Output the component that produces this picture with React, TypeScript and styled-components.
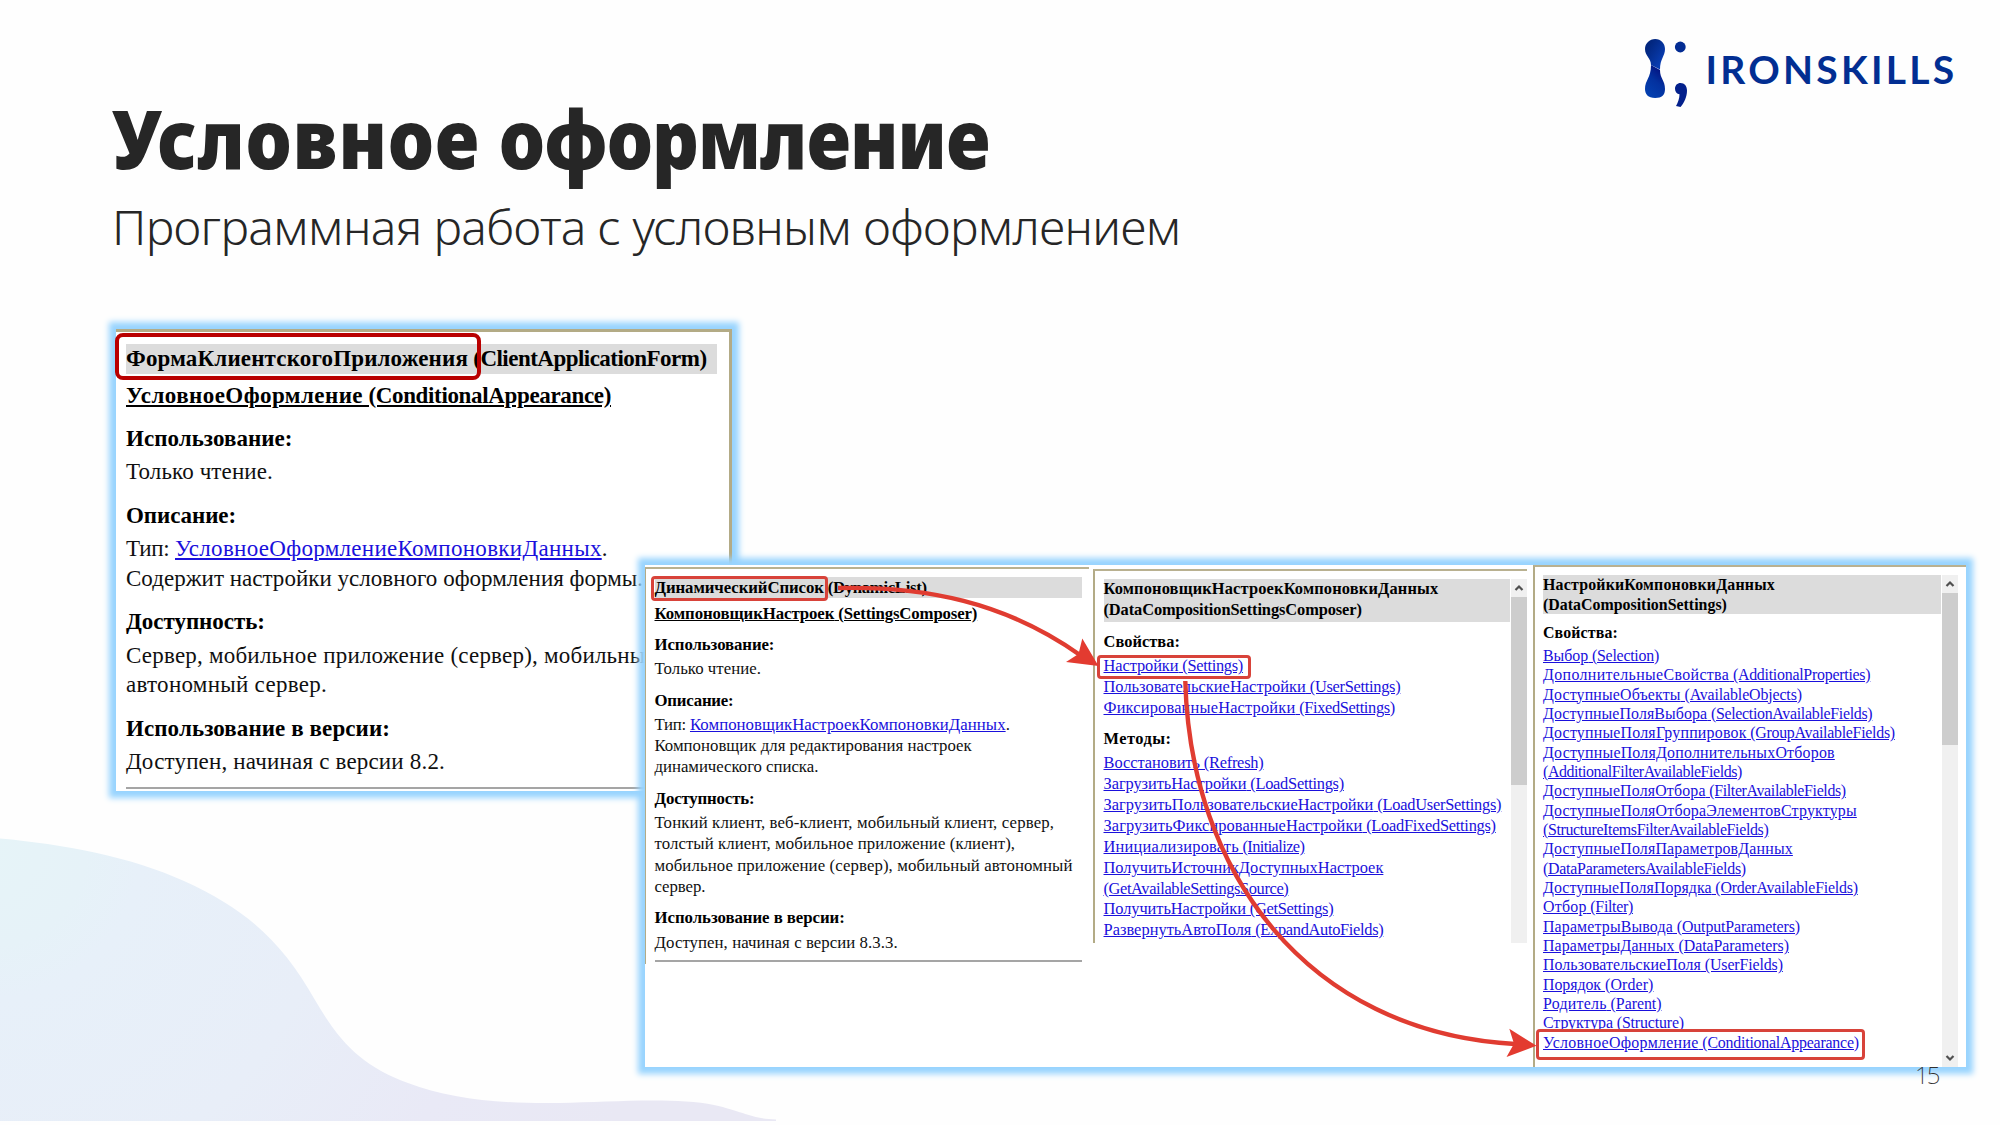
import React from 'react';
import styled, { createGlobalStyle, css } from 'styled-components';

const GlobalStyle = createGlobalStyle`
  body {
    margin: 0;
    background: #ffffff;
  }
`;

const serif = '"Liberation Serif", "Times New Roman", serif';

const Slide = styled.main`
  position: relative;
  width: 2000px;
  height: 1125px;
  overflow: hidden;
  background: #fefefe;
  color: #262626;
  font-family: 'Noto Sans', sans-serif;
`;

const Wave = styled.svg`
  position: absolute;
  left: 0;
  top: 830px;
`;

const Heading = styled.header`
  position: relative;
  padding: 77px 0 0 112px;
  white-space: nowrap;
`;

const Title = styled.h1`
  margin: 0;
  font-size: 82px;
  font-weight: 900;
  line-height: 120px;
  transform: scaleX(0.894);
  transform-origin: 0 50%;
`;

const TitleWord = styled.span<{ $track: number }>`
  letter-spacing: ${(p) => p.$track}px;
`;

const Subtitle = styled.p`
  margin: 2px 0 0;
  font-size: 48px;
  font-weight: 300;
  line-height: 56px;
  letter-spacing: -0.62px;
`;

const Logo = styled.div`
  position: absolute;
  left: 1640px;
  top: 32px;
  display: flex;
  align-items: center;
`;

const LogoName = styled.span`
  margin: -7px 0 0 11.5px;
  font-family: Lato, sans-serif;
  font-size: 39px;
  font-weight: 700;
  line-height: 50px;
  letter-spacing: 3.25px;
  color: #022e92;
`;

const glow = css`
  box-shadow: 0 0 6px 7px #98d4fe;
`;

const FormWindow = styled.section`
  position: absolute;
  left: 116px;
  top: 329px;
  width: 616px;
  height: 462px;
  box-sizing: border-box;
  padding: 12px 12px 0 10px;
  border-top: 3px solid #b3ab86;
  border-right: 3px solid #b3ab86;
  background: #ffffff;
  ${glow}
`;

const ListWindow = styled.section`
  position: absolute;
  left: 645px;
  top: 565px;
  width: 1321px;
  height: 502px;
  display: flex;
  align-items: flex-start;
  background: #ffffff;
  ${glow}
`;

const Pane = styled.div<{ $width: number; $height: number; $top: number; $gap: number; $edge: number; $pad: string }>`
  display: flex;
  box-sizing: border-box;
  flex: none;
  width: ${(p) => p.$width}px;
  height: ${(p) => p.$height}px;
  margin-top: ${(p) => p.$top}px;
  margin-right: ${(p) => p.$gap}px;
  padding: ${(p) => p.$pad};
  border-top: 2px solid #b9b190;
  border-left: ${(p) => p.$edge}px solid #b3ab86;
  overflow: hidden;
`;

const Doc = styled.div<{ $size: number; $line: number; $section: number; $body: number }>`
  flex: 1;
  min-width: 0;
  font-family: ${serif};
  font-size: ${(p) => p.$size}px;
  line-height: ${(p) => p.$line}px;
  color: #101010;
  white-space: pre;

  h3 {
    margin: ${(p) => p.$section}px 0 ${(p) => p.$body}px;
    font-size: inherit;
    color: #000000;
  }
`;

const DocHeader = styled.div<{ $extra?: number }>`
  padding-bottom: ${(p) => p.$extra ?? 0}px;
  background: #dcdcdc;
  font-weight: 700;
  color: #000000;
`;

const Member = styled.div<{ $gap: number }>`
  margin-top: ${(p) => p.$gap}px;
  font-weight: 700;
  color: #000000;
  text-decoration: underline;
`;

const Row = styled.div``;

const Link = styled.a`
  color: #1a10dc;
  text-decoration: underline;
`;

const Rule = styled.hr<{ $gap: number }>`
  margin: ${(p) => p.$gap}px 0 0;
  border: 0;
  border-top: 2px solid #a5a5a5;
`;

const Track = styled.div<{ $width: number; $gap: number }>`
  display: flex;
  flex: none;
  flex-direction: column;
  align-items: center;
  width: ${(p) => p.$width}px;
  margin-left: ${(p) => p.$gap}px;
  background: #f0f0f0;
`;

const Thumb = styled.div<{ $height: number }>`
  width: 100%;
  height: ${(p) => p.$height}px;
  margin-bottom: auto;
  background: #cdcdcd;
`;

const Chevron = styled.svg`
  flex: none;
  width: 10px;
  height: 18px;
`;

const Callout = styled.div<{ $x: number; $y: number; $w: number; $h: number; $strong?: boolean }>`
  position: absolute;
  box-sizing: border-box;
  left: ${(p) => p.$x}px;
  top: ${(p) => p.$y}px;
  width: ${(p) => p.$w}px;
  height: ${(p) => p.$h}px;
  border: ${(p) => (p.$strong ? '4px solid #b90000' : '3px solid #d8433a')};
  border-radius: ${(p) => (p.$strong ? 8 : 4)}px;
`;

const Arrows = styled.svg`
  position: absolute;
  left: 0;
  top: 0;
  pointer-events: none;
`;

const PageNumber = styled.div`
  position: absolute;
  left: 1915px;
  top: 1057.5px;
  font-size: 24px;
  font-weight: 200;
  line-height: 33px;
  letter-spacing: -2px;
  color: #303030;
`;

const pen = document.createElement('canvas').getContext('2d')!;

/* Letter spacing that brings a string to the given width at the given size. */
function tracking(text: string, size: number, bold: boolean, width: number) {
  pen.font = `${bold ? 'bold ' : ''}100px "Liberation Serif"`;
  return (width - (pen.measureText(text).width * size) / 100) / text.length;
}

const SizeContext = React.createContext(16);

/* w is the width of the whole string, first that of its part before the bracket. */
function T({ w, first, b = false, children }: { w: number; first?: number; b?: boolean; children: string }) {
  const size = React.useContext(SizeContext);
  const cut = first ? children.indexOf(' (') : -1;
  const parts: [string, number][] =
    first && cut > 0
      ? [
          [children.slice(0, cut), first],
          [children.slice(cut), w - first],
        ]
      : [[children, w]];
  return (
    <>
      {parts.map(([text, width]) => (
        <span key={text} style={{ letterSpacing: `${tracking(text, size, b, width).toFixed(3)}px` }}>{text}</span>
      ))}
    </>
  );
}

type Entry = [string, number, number?];

const Links = ({ items }: { items: Entry[] }) => (
  <>
    {items.map(([text, w, first]) => (
      <Row key={text}>
        <Link><T w={w} first={first}>{text}</T></Link>
      </Row>
    ))}
  </>
);

const Lines = ({ items }: { items: Entry[] }) => (
  <>
    {items.map(([text, w]) => (
      <Row key={text}><T w={w}>{text}</T></Row>
    ))}
  </>
);

const Section = ({ w, children }: { w: number; children: string }) => (
  <h3><T b w={w}>{children}</T></h3>
);

const composerProps: Entry[] = [
  ['Настройки (Settings)', 139.5, 75],
  ['ПользовательскиеНастройки (UserSettings)', 297, 202.5],
  ['ФиксированныеНастройки (FixedSettings)', 291.5, 192],
];

const composerMethods: Entry[] = [
  ['Восстановить (Refresh)', 160, 96.5],
  ['ЗагрузитьНастройки (LoadSettings)', 240.5, 143],
  ['ЗагрузитьПользовательскиеНастройки (LoadUserSettings)', 398, 270],
  ['ЗагрузитьФиксированныеНастройки (LoadFixedSettings)', 392.5, 259],
  ['Инициализировать (Initialize)', 201, 135.5],
  ['ПолучитьИсточникДоступныхНастроек', 280],
  ['(GetAvailableSettingsSource)', 185],
  ['ПолучитьНастройки (GetSettings)', 230, 142.5],
  ['РазвернутьАвтоПоля (ExpandAutoFields)', 280, 148],
];

const settingsProps: Entry[] = [
  ['Выбор (Selection)', 116, 45.3],
  ['ДополнительныеСвойства (AdditionalProperties)', 327.5, 186.3],
  ['ДоступныеОбъекты (AvailableObjects)', 259, 137.7],
  ['ДоступныеПоляВыбора (SelectionAvailableFields)', 329.5, 164.3],
  ['ДоступныеПоляГруппировок (GroupAvailableFields)', 352, 203.7],
  ['ДоступныеПоляДополнительныхОтборов', 292],
  ['(AdditionalFilterAvailableFields)', 199],
  ['ДоступныеПоляОтбора (FilterAvailableFields)', 303, 162.7],
  ['ДоступныеПоляОтбораЭлементовСтруктуры', 314],
  ['(StructureItemsFilterAvailableFields)', 225.5],
  ['ДоступныеПоляПараметровДанных', 250],
  ['(DataParametersAvailableFields)', 203],
  ['ДоступныеПоляПорядка (OrderAvailableFields)', 315, 168.7],
  ['Отбор (Filter)', 90, 43.7],
  ['ПараметрыВывода (OutputParameters)', 257, 130],
  ['ПараметрыДанных (DataParameters)', 246, 131.7],
  ['ПользовательскиеПоля (UserFields)', 240, 158],
  ['Порядок (Order)', 110.5, 58],
  ['Родитель (Parent)', 118.5, 63.7],
  ['Структура (Structure)', 141, 70],
  ['УсловноеОформление (ConditionalAppearance)', 316, 155.7],
];

function FormDoc() {
  return (
    <SizeContext.Provider value={23}>
      <Doc $size={23} $line={29.5} $section={14.15} $body={3.75}>
        <DocHeader><T b w={580.5} first={342}>ФормаКлиентскогоПриложения (ClientApplicationForm)</T></DocHeader>
        <Member $gap={7}><T b w={485} first={237}>УсловноеОформление (ConditionalAppearance)</T></Member>
        <Section w={166.5}>Использование:</Section>
        <Lines items={[['Только чтение.', 147]]} />
        <Section w={110}>Описание:</Section>
        <Row>
          <T w={49}>{'Тип: '}</T>
          <Link><T w={426.7}>УсловноеОформлениеКомпоновкиДанных</T></Link>.
        </Row>
        <Lines items={[['Содержит настройки условного оформления формы.', 517]]} />
        <Section w={139}>Доступность:</Section>
        <Lines
          items={[
            ['Сервер, мобильное приложение (сервер), мобильный', 532],
            ['автономный сервер.', 201],
          ]}
        />
        <Section w={264}>Использование в версии:</Section>
        <Lines items={[['Доступен, начиная с версии 8.2.', 319]]} />
        <Rule $gap={10} />
      </Doc>
    </SizeContext.Provider>
  );
}

function ListDoc() {
  return (
    <SizeContext.Provider value={16.8}>
      <Doc $size={16.8} $line={21.2} $section={10.2} $body={3.2}>
        <DocHeader><T b w={272.5} first={169.5}>ДинамическийСписок (DynamicList)</T></DocHeader>
        <Member $gap={4.8}><T b w={323} first={180}>КомпоновщикНастроек (SettingsComposer)</T></Member>
        <Section w={120}>Использование:</Section>
        <Lines items={[['Только чтение.', 106.5]]} />
        <Section w={79}>Описание:</Section>
        <Row>
          <T w={35.5}>{'Тип: '}</T>
          <Link><T w={316}>КомпоновщикНастроекКомпоновкиДанных</T></Link>.
        </Row>
        <Lines
          items={[
            ['Компоновщик для редактирования настроек', 317.5],
            ['динамического списка.', 164],
          ]}
        />
        <Section w={100}>Доступность:</Section>
        <Lines
          items={[
            ['Тонкий клиент, веб-клиент, мобильный клиент, сервер,', 400],
            ['толстый клиент, мобильное приложение (клиент),', 361],
            ['мобильное приложение (сервер), мобильный автономный', 418.5],
            ['сервер.', 51],
          ]}
        />
        <Section w={190.5}>Использование в версии:</Section>
        <Lines items={[['Доступен, начиная с версии 8.3.3.', 243.5]]} />
        <Rule $gap={7.5} />
      </Doc>
    </SizeContext.Provider>
  );
}

function ComposerDoc() {
  return (
    <SizeContext.Provider value={16.4}>
      <Doc $size={16.4} $line={20.85} $section={10.2} $body={3.6}>
        <DocHeader $extra={1}>
          <Row><T b w={335}>КомпоновщикНастроекКомпоновкиДанных</T></Row>
          <Row><T b w={258.5}>(DataCompositionSettingsComposer)</T></Row>
        </DocHeader>
        <Section w={76.5}>Свойства:</Section>
        <Links items={composerProps} />
        <Section w={68}>Методы:</Section>
        <Links items={composerMethods} />
      </Doc>
    </SizeContext.Provider>
  );
}

function SettingsDoc() {
  return (
    <SizeContext.Provider value={15.9}>
      <Doc $size={15.9} $line={19.35} $section={9.3} $body={3.3}>
        <DocHeader>
          <Row><T b w={232}>НастройкиКомпоновкиДанных</T></Row>
          <Row><T b w={184}>(DataCompositionSettings)</T></Row>
        </DocHeader>
        <Section w={75}>Свойства:</Section>
        <Links items={settingsProps} />
      </Doc>
    </SizeContext.Provider>
  );
}

const ChevronIcon = ({ down = false }: { down?: boolean }) => (
  <Chevron viewBox="0 0 10 18">
    <path d={down ? 'M1.5 7 5 10.500 8.5 7' : 'M1.5 11 5 7.500 8.5 11'} fill="none" stroke="#505050" strokeWidth="2.2" />
  </Chevron>
);

function LogoMark() {
  return (
    <svg width="54" height="80" viewBox="0 0 54 80">
      <defs>
        <linearGradient id="top" x1="0" y1="0" x2="1" y2="1">
          <stop offset="0.2" stopColor="#02267e" />
          <stop offset="1" stopColor="#0b45c4" />
        </linearGradient>
        <linearGradient id="bottom" x1="0.8" y1="0" x2="0.3" y2="1">
          <stop offset="0" stopColor="#030a78" />
          <stop offset="0.5" stopColor="#03319f" />
          <stop offset="1" stopColor="#0440b0" />
        </linearGradient>
      </defs>
      <path d="M11 13 L20 18 C20 27 25 28 25 37 C25 43 22 46 15.200 46 C8 46 5 42 5 37 C5 28 11 26 11 13 Z" transform="translate(0 20)" fill="url(#bottom)" />
      <path d="M15.200 7 C21 7 25 11.500 25 17 C25 24 20 27 20 37.500 L11 33 C11 26 5 24 5 17 C5 11.500 9.500 7 15.200 7 Z" fill="url(#top)" />
      <circle cx="40.300" cy="15" r="5.400" fill="#032c93" />
      <path d="M40.500 51 C44.500 51 47 54 47 58.500 C47 65 44 71 40.500 75 L36 74 C38 70.500 39.500 66 39.500 62.300 C36.800 61.800 35 59.500 35 56.700 C35 53.400 37.300 51 40.500 51 Z" fill="#03208c" />
    </svg>
  );
}

export default function App() {
  return (
    <Slide>
      <GlobalStyle />
      <Wave width="800" height="291" viewBox="0 830 800 291">
        <defs>
          <radialGradient id="wave" gradientUnits="userSpaceOnUse" cx="-10" cy="850" r="680">
            <stop offset="0" stopColor="#e6f4f8" />
            <stop offset="0.14" stopColor="#e6f2f8" />
            <stop offset="0.22" stopColor="#e7f0f9" />
            <stop offset="0.5" stopColor="#e8eef8" />
            <stop offset="0.75" stopColor="#e9e9f6" />
            <stop offset="1" stopColor="#e9e8f4" />
          </radialGradient>
        </defs>
        <path
          d="M0 838.500 C62 844 132 857 184 881 C250 911 283 944 315 1000 C340 1043 362 1066 408 1083 C450 1099 500 1104 560 1103 C610 1102 675 1097 714 1105 C745 1112 752 1119 776 1119.500 V1121 H0 Z"
          fill="url(#wave)"
        />
      </Wave>

      <Heading>
        <Title>
          <TitleWord $track={0.8}>Условное</TitleWord> <TitleWord $track={-1}>оформление</TitleWord>
        </Title>
        <Subtitle>Программная работа с условным оформлением</Subtitle>
      </Heading>

      <Logo>
        <LogoMark />
        <LogoName>IRONSKILLS</LogoName>
      </Logo>

      <FormWindow>
        <FormDoc />
      </FormWindow>
      <Callout $strong $x={115} $y={333} $w={366} $h={47} />

      <ListWindow>
        <Pane $width={444} $height={397} $top={1.5} $gap={3.5} $edge={1} $pad="8px 7px 0 8.5px">
          <ListDoc />
        </Pane>
        <Pane $width={434.5} $height={374} $top={4} $gap={6} $edge={2} $pad="8px 0 0 9px">
          <ComposerDoc />
          <Track $width={16} $gap={1}>
            <ChevronIcon />
            <Thumb $height={188} />
          </Track>
        </Pane>
        <Pane $width={433} $height={502} $top={0} $gap={0} $edge={2} $pad="8.2px 8.5px 0 8px">
          <SettingsDoc />
          <Track $width={15.5} $gap={1.5}>
            <ChevronIcon />
            <Thumb $height={151.5} />
            <ChevronIcon down />
          </Track>
        </Pane>
      </ListWindow>

      <PageNumber>15</PageNumber>

      <Callout $x={651} $y={576} $w={177} $h={25} />
      <Callout $x={1097} $y={655} $w={154} $h={24} />
      <Callout $x={1536} $y={1029} $w={329} $h={31} />

      <Arrows width="2000" height="1125" viewBox="0 0 2000 1125">
        <path d="M838 588 C925 586 1005 602 1080 655" fill="none" stroke="#e03c31" strokeWidth="4.4" />
        <path d="M1098.500 666 L1082.300 638.500 L1078.500 654 L1066 662 Z" fill="#e33b30" />
        <path d="M1185.300 681 C1190 870 1305 1032 1515 1044" fill="none" stroke="#e03c31" strokeWidth="4.4" />
        <path d="M1536.500 1045.700 L1509.300 1028.700 L1514 1043.700 L1506.500 1057 Z" fill="#e33b30" />
      </Arrows>
    </Slide>
  );
}
